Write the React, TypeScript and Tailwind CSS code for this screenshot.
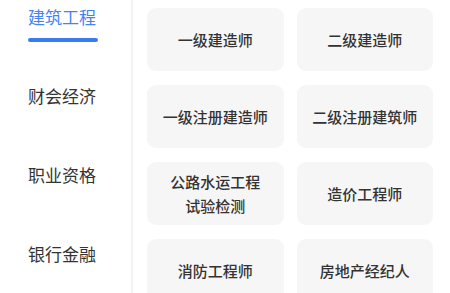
import React from "react";

const tabs = ["建筑工程", "财会经济", "职业资格", "银行金融"];

const exams: string[][] = [
  ["一级建造师"],
  ["二级建造师"],
  ["一级注册建造师"],
  ["二级注册建筑师"],
  ["公路水运工程", "试验检测"],
  ["造价工程师"],
  ["消防工程师"],
  ["房地产经纪人"],
];

export default function App() {
  const active = 0;
  return (
    <div
      className="flex w-[450px] h-[293px] overflow-hidden bg-white"
      style={{ fontFamily: '"Noto Sans CJK SC", "Noto Sans", sans-serif' }}
    >
      {/* category sidebar */}
      <div className="w-[131px] shrink-0 flex flex-col">
        {tabs.map((t, i) => (
          <div key={t} className="h-[79px] shrink-0 pt-[8px] pl-[28px]">
            <p
              className={
                i === active
                  ? "text-[17px] leading-[18px] text-[#4583ef]"
                  : "text-[17px] leading-[18px] text-[#333333]"
              }
            >
              {t}
            </p>
            {i === active && (
              <div className="mt-[12px] w-[70px] h-[3.5px] rounded-full bg-[#3a7cf0]"></div>
            )}
          </div>
        ))}
      </div>
      <div className="w-[2px] shrink-0 bg-[#f2f2f2]"></div>

      {/* exam cards */}
      <div className="flex-1 pt-[8px] pl-[14px] pr-[17px]">
        <div className="grid grid-cols-2 gap-x-[13px] gap-y-[14px]">
          {exams.map((lines) => (
            <div
              key={lines.join("")}
              className="h-[63px] rounded-[9px] bg-[#f6f6f6] flex flex-col items-center justify-center"
            >
              {lines.map((l) => (
                <span key={l} className="text-[15px] leading-[24px] font-medium text-[#333333]">
                  {l}
                </span>
              ))}
            </div>
          ))}
        </div>
      </div>
    </div>
  );
}
